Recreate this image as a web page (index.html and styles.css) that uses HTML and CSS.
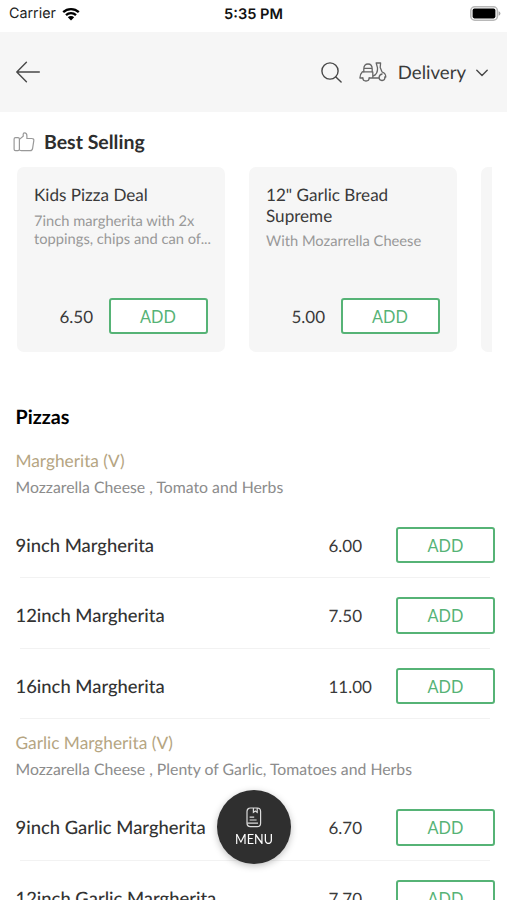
FILE: index.html
```html
<!DOCTYPE html>
<html lang="en">
<head>
    <meta charset="UTF-8">
    <meta name="viewport" content="width=device-width, initial-scale=1.0">
    <title>Menu</title>
    <link rel="stylesheet" href="styles.css">
</head>
<body>
    <div class="status-bar">
        <div class="carrier">
            <span>Carrier</span>
            <svg width="18" height="14" viewBox="0 0 18 14">
                <path d="M1.2 5.2a11.2 11.2 0 0 1 15.6 0M4 8.1a7.2 7.2 0 0 1 10 0" fill="none" stroke="#000" stroke-width="2.3"/>
                <path d="M9 13.6l-3.2-3.3a4.6 4.6 0 0 1 6.4 0z"/>
            </svg>
        </div>
        <span class="time">5:35 PM</span>
        <svg class="battery" width="31" height="15" viewBox="0 0 31 15">
            <rect x="0.8" y="0.8" width="26.6" height="13.4" rx="4" fill="#fff" stroke="#b8b8b8" stroke-width="1.6"/>
            <rect x="2.6" y="2.6" width="22.8" height="9.8" rx="1.8"/>
            <path d="M28.6 5.2q1.8 .6 1.8 2.3t-1.8 2.3z" fill="#a5a5a5"/>
        </svg>
    </div>

    <header class="header">
        <svg width="24" height="22" viewBox="0 0 24 22" class="icon">
            <path d="M23.3 11H.9M10.4 1.2L.8 11l9.6 9.8"/>
        </svg>
        <div class="header-right">
            <svg width="21" height="21" viewBox="0 0 21 21" class="icon">
                <circle cx="9" cy="9" r="8.1"/>
                <path d="M14.9 14.9l5.2 5.2"/>
            </svg>
            <svg width="28" height="20" viewBox="0 0 28 20" class="icon scooter">
                <path d="M4.8 9.8V7C4.8 3.6 6.5 2 9 2s4.2 1.6 4.2 5v2.8M4.8 6.4h8.4"/>
                <path d="M3.4 9.8h10.4v5.8M3.4 9.8C1.8 11.4.9 13.4.9 16h2.9M10.2 16h9.9M14 14.2c3-1.2 4.9-3.6 4.5-8.4L17.2 1h4.4l-.4 4.4 1.9 4.6c2.4.8 3.7 2.6 3.7 5h-1"/>
                <path d="M3.8 15.8a3.2 3.2 0 0 0 6.4 0M20.1 15.8a2.9 2.9 0 0 0 5.8-.4M20.1 15.8c0-2 1-3.4 3-3.8"/>
            </svg>
            <span class="mode">Delivery</span>
            <svg width="12" height="8" viewBox="0 0 12 8" class="icon chevron">
                <path d="M.8 1.2L6 6.5l5.2-5.3"/>
            </svg>
        </div>
    </header>

    <section class="best">
        <h2 class="best-title">
            <svg width="22" height="20" viewBox="0 0 22 20">
                <rect x="1.1" y="5.7" width="5.3" height="12.9" rx="1.4"/>
                <path d="M6.4 7.4l3.8-3.2V2.2q0-1.3 1.3-1.3 2.4 0 2.4 3v2.6h4.9q2.2 0 2 2.1l-1.2 7.7q-.3 2.3-2.3 2.3H8.2q-1.4 0-1.8-1"/>
            </svg>
            Best Selling
        </h2>
        <div class="cards">
            <div class="card">
                <h3>Kids Pizza Deal</h3>
                <p>7inch margherita with 2x toppings, chips and can of...</p>
                <div class="card-bottom">
                    <span class="price">6.50</span>
                    <button class="btn">ADD</button>
                </div>
            </div>
            <div class="card">
                <h3>12" Garlic Bread Supreme</h3>
                <p>With Mozarrella Cheese</p>
                <div class="card-bottom">
                    <span class="price">5.00</span>
                    <button class="btn">ADD</button>
                </div>
            </div>
            <div class="card"></div>
        </div>
    </section>

    <section class="menu">
        <h2 class="menu-title">Pizzas</h2>

        <div class="group">
            <div class="group-head">
                <h3>Margherita (V)</h3>
                <p>Mozzarella Cheese , Tomato and Herbs</p>
            </div>
            <div class="row">
                <span class="name">9inch Margherita</span>
                <span class="price">6.00</span>
                <button class="btn">ADD</button>
            </div>
            <div class="row">
                <span class="name">12inch Margherita</span>
                <span class="price">7.50</span>
                <button class="btn">ADD</button>
            </div>
            <div class="row">
                <span class="name">16inch Margherita</span>
                <span class="price">11.00</span>
                <button class="btn">ADD</button>
            </div>
        </div>

        <div class="group">
            <div class="group-head">
                <h3>Garlic Margherita (V)</h3>
                <p>Mozzarella Cheese , Plenty of Garlic, Tomatoes and Herbs</p>
            </div>
            <div class="row">
                <span class="name">9inch Garlic Margherita</span>
                <span class="price">6.70</span>
                <button class="btn">ADD</button>
            </div>
            <div class="row">
                <span class="name">12inch Garlic Margherita</span>
                <span class="price">7.70</span>
                <button class="btn">ADD</button>
            </div>
        </div>
    </section>

    <button class="menu-btn">
        <svg width="16" height="21" viewBox="0 0 16 21">
            <rect x="1" y="1" width="13.6" height="18.6" rx="3.4"/>
            <path d="M7.4 1v4.4l1.9-1.3 1.9 1.3V1M3.6 10.2h4.6M3.6 13h7M1.2 16.2h10.8"/>
        </svg>
        <span>MENU</span>
    </button>
</body>
</html>
```
FILE: styles.css
```css
* {
    box-sizing: border-box;
}
body {
    font-family: 'Lato', sans-serif;
    margin: 0;
    height: 900px;
    overflow: hidden;
    background: #fff;
    color: #3a3a3a;
    text-rendering: geometricPrecision;
}
h2, h3, p {
    margin: 0;
}
.status-bar {
    display: grid;
    grid-template-columns: 1fr auto 1fr;
    align-items: center;
    height: 32px;
    padding: 0 6px 5px 9px;
    font-family: 'Inter', sans-serif;
    font-size: 14.3px;
    color: #222;
}
.carrier {
    display: flex;
    align-items: center;
    gap: 6px;
}
.time {
    font-size: 14.6px;
    font-weight: 600;
    color: #111;
    margin-right: 3px;
}
.battery {
    justify-self: end;
}
.header {
    display: flex;
    justify-content: space-between;
    align-items: center;
    height: 80px;
    padding: 0 19px 0 16px;
    background: #f6f6f6;
}
.header-right {
    display: flex;
    align-items: center;
}
.icon {
    fill: none;
    stroke: #484848;
    stroke-width: 1.4;
    stroke-linecap: round;
    stroke-linejoin: round;
}
.scooter {
    margin: 0 11px 0 17px;
    stroke: #666;
    stroke-width: 1.3;
}
.mode {
    font-size: 18.6px;
}
.chevron {
    margin: 2px 0 0 10px;
}
.best {
    padding: 18px 15px 0 13px;
}
.best-title {
    display: flex;
    align-items: center;
    gap: 9px;
    height: 24px;
    font-size: 19.5px;
    color: #2e2e2e;
}
.best-title svg {
    fill: none;
    stroke: #999;
    stroke-width: 1.2;
}
.cards {
    display: flex;
    gap: 24.5px;
    margin: 13px 0 0 4px;
    overflow: hidden;
}
.card {
    display: flex;
    flex-direction: column;
    flex: 0 0 207.5px;
    height: 185px;
    padding: 18px 17px;
    background: #f6f6f6;
    border-radius: 7px;
}
.card h3 {
    font-size: 17.1px;
    font-weight: 400;
    line-height: 20.5px;
}
.card p {
    margin: 6px -6px 0 0;
    font-size: 14.7px;
    line-height: 18px;
    color: #999;
}
.card-bottom {
    display: flex;
    justify-content: flex-end;
    align-items: center;
    gap: 15.5px;
    margin-top: auto;
}
.price {
    padding-top: 1px;
    font-size: 17px;
}
.btn {
    width: 99px;
    height: 36.5px;
    padding: 1px 0 0;
    font-family: inherit;
    font-size: 16.3px;
    color: #56b376;
    background: #fff;
    border: 2px solid #56b376;
    border-radius: 3px;
}
.menu {
    padding: 53px 12px 0 15.5px;
}
.menu-title {
    height: 32px;
    font-size: 19.7px;
    line-height: 25px;
    color: #000;
}
.group-head {
    height: 70.6px;
    padding-top: 12px;
}
.group-head h3 {
    font-size: 17.3px;
    font-weight: 400;
    line-height: 24px;
    color: #b5a582;
}
.group-head p {
    margin-top: 3px;
    font-size: 15.8px;
    line-height: 23px;
    color: #8c8c8c;
}
.row {
    display: grid;
    grid-template-columns: 313px 1fr 99px;
    align-items: center;
    height: 70.6px;
    padding-top: 4px;
    background: linear-gradient(#f2f2f2, #f2f2f2) 4px 100% / 470px 1px no-repeat;
}
.name {
    font-size: 18.4px;
    font-weight: 500;
    color: #333;
}
.menu-btn {
    position: fixed;
    left: 217px;
    top: 790px;
    display: flex;
    flex-direction: column;
    align-items: center;
    width: 74px;
    height: 74px;
    padding: 17px 0 0;
    gap: 4px;
    font-family: inherit;
    font-size: 12.6px;
    color: #fff;
    background: #2f2f2f;
    border: none;
    border-radius: 50%;
    box-shadow: 0 2px 7px rgba(0, 0, 0, 0.25);
}
.menu-btn svg {
    fill: none;
    stroke: #ddd;
    stroke-width: 1.2;
}
```
